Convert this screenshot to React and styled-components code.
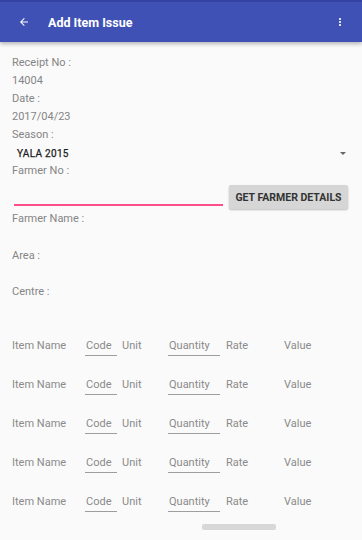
import React from 'react'
import styled, { createGlobalStyle } from 'styled-components'

const GlobalStyle = createGlobalStyle`
  html, body {
    margin: 0;
    padding: 0;
    background: #fafafa;
    font-family: Roboto, 'Noto Sans', sans-serif;
  }
`

const Screen = styled.div`
  width: 362px;
  height: 540px;
  overflow: hidden;
  position: relative;
  background: #fafafa;
`

const AppBar = styled.div`
  height: 40px;
  border-top: 2px solid #3342a3;
  background: #3f51b5;
  display: flex;
  align-items: center;
  color: #fff;
  box-shadow: 0 2px 4px rgba(0,0,0,0.28);
  position: relative;
  z-index: 1;
`

const IconButton = styled.div`
  width: ${p => p.w}px;
  display: flex;
  align-items: center;
  justify-content: center;
`

const Title = styled.div`
  flex: 1;
  font-size: 12.5px;
  font-weight: 700;
`

const Content = styled.div`
  padding: 12px 0 0 12px;
`

const Line = styled.div`
  height: 18px;
  line-height: 18px;
  font-size: 11px;
  color: #858585;
`

const SpinnerRow = styled.div`
  height: 18px;
  display: flex;
  align-items: center;
  justify-content: space-between;
  padding: 0 16px 0 5px;
  font-size: 10px;
  font-weight: 400;
  color: #1a1a1a;
  letter-spacing: 0.3px;
  -webkit-text-stroke: 0.25px #1a1a1a;
`

const Caret = styled.div`
  width: 0;
  height: 0;
  border-left: 3px solid transparent;
  border-right: 3px solid transparent;
  border-top: 3px solid #666;
`

const InputRow = styled.div`
  display: flex;
  align-items: flex-start;
  padding-top: 5px;
  box-sizing: border-box;
  height: 30px;
`

const Input = styled.div`
  width: 209px;
  height: 19px;
  margin-left: 2px;
  border-bottom: 2px solid #ff4f8b;
`

const Button = styled.div`
  margin-left: 6px;
  width: 119px;
  height: 24px;
  background: #d6d6d6;
  border-radius: 2px;
  box-shadow: 0 1px 2px rgba(0,0,0,0.25);
  display: flex;
  align-items: center;
  justify-content: center;
  font-size: 10.5px;
  font-weight: 700;
  color: #333;
`

const Field = styled(Line)`
  margin-bottom: ${p => p.gap}px;
`

const Items = styled.div`
  margin-top: 37px;
`

const ItemRow = styled.div`
  height: 39px;
  display: grid;
  grid-template-columns: 73px 37px 46px 57px 59px auto;
  align-items: start;
  font-size: 11px;
  color: #8a8a8a;
  line-height: 16px;
`

const Cell = styled.div`
  padding-left: ${p => p.pl || 0}px;
`

const EditCell = styled.div`
  width: ${p => p.w}px;
  border-bottom: 1px solid #9e9e9e;
  padding-left: 1px;
  padding-bottom: 1px;
  box-sizing: border-box;
`

const ScrollThumb = styled.div`
  position: absolute;
  left: 202px;
  top: 524px;
  width: 74px;
  height: 6px;
  border-radius: 2px;
  background: #d8d8d8;
`

const fields = [
  ['Farmer Name :', 19],
  ['Area :', 18],
  ['Centre :', 0],
]

function ItemLine() {
  return (
    <ItemRow>
      <Cell>Item Name</Cell>
      <EditCell w={32}>Code</EditCell>
      <Cell>Unit</Cell>
      <EditCell w={52}>Quantity</EditCell>
      <Cell pl={1}>Rate</Cell>
      <Cell>Value</Cell>
    </ItemRow>
  )
}

export default function App() {
  return (
    <Screen>
      <GlobalStyle />
      <AppBar>
        <IconButton w={48}>
          <svg width="12" height="12" viewBox="0 0 24 24">
            <path d="M20 11H7.83l5.59-5.59L12 4l-8 8 8 8 1.41-1.41L7.83 13H20v-2z" fill="#fff" />
          </svg>
        </IconButton>
        <Title>Add Item Issue</Title>
        <IconButton w={44}>
          <svg width="12" height="12" viewBox="0 0 24 24">
            <path d="M12 8c1.1 0 2-.9 2-2s-.9-2-2-2-2 .9-2 2 .9 2 2 2zm0 2c-1.1 0-2 .9-2 2s.9 2 2 2 2-.9 2-2-.9-2-2-2zm0 6c-1.1 0-2 .9-2 2s.9 2 2 2 2-.9 2-2-.9-2-2-2z" fill="#fff" />
          </svg>
        </IconButton>
      </AppBar>
      <Content>
        <Line>Receipt No :</Line>
        <Line>14004</Line>
        <Line>Date :</Line>
        <Line>2017/04/23</Line>
        <Line>Season :</Line>
        <SpinnerRow>
          YALA 2015
          <Caret />
        </SpinnerRow>
        <Line>Farmer No :</Line>
        <InputRow>
          <Input />
          <Button>GET FARMER DETAILS</Button>
        </InputRow>
        {fields.map(([label, gap]) => (
          <Field key={label} gap={gap}>{label}</Field>
        ))}
        <Items>
          {[0, 1, 2, 3, 4].map(i => <ItemLine key={i} />)}
        </Items>
      </Content>
      <ScrollThumb />
    </Screen>
  )
}
